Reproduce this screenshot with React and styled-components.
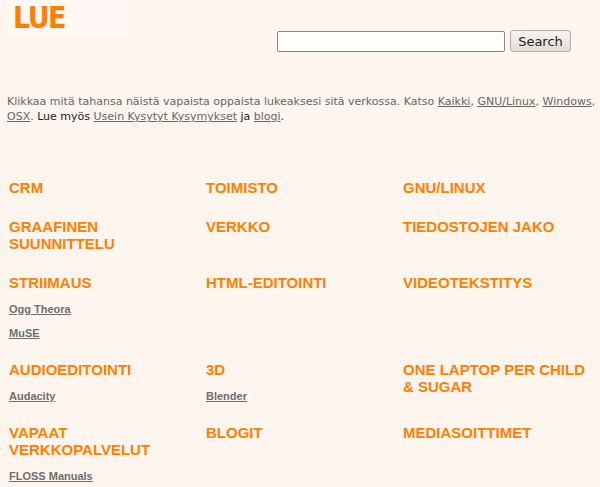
import React from "react";
import styled, { createGlobalStyle } from "styled-components";

const GlobalStyle = createGlobalStyle`
  html, body {
    margin: 0;
    padding: 0;
    background-color: #fef5ef;
  }
  body {
    font-family: "DejaVu Sans", Verdana, sans-serif;
  }
`;

const Page = styled.div`
  width: 600px;
  min-height: 487px;
  background-color: #fef5ef;
`;

const Header = styled.div`
  display: flex;
  justify-content: space-between;
  align-items: flex-start;
  padding: 0 29px 0 7px;
`;

const LogoBox = styled.div`
  width: 121px;
  height: 34px;
  background-color: #fff8f4;
  box-sizing: border-box;
  padding: 1px 0 0 6px;
`;

const Logo = styled.a`
  font-family: "DejaVu Sans Condensed", "DejaVu Sans", sans-serif;
  font-weight: bold;
  font-size: 30px;
  line-height: 34px;
  letter-spacing: -1.5px;
  color: #ff7f00;
  text-decoration: none;
`;

const SearchForm = styled.form`
  display: flex;
  align-items: center;
  gap: 5px;
  margin-top: 30px;
`;

const SearchInput = styled.input`
  width: 228px;
  height: 21px;
  box-sizing: border-box;
  border: 1px solid #8a8580;
  border-radius: 2px;
  background: #fffffc;
  padding: 0 4px;
  outline: none;
`;

const SearchButton = styled.button`
  width: 61px;
  height: 22px;
  box-sizing: border-box;
  border: 1px solid #b3ada6;
  border-radius: 3px;
  background: linear-gradient(#f7f4f0, #e2ddd7);
  font-family: "DejaVu Sans", sans-serif;
  font-size: 13px;
  color: #222;
  padding: 0;
`;

const Intro = styled.p`
  margin: 42px 2px 0 7px;
  font-size: 11px;
  line-height: 15px;
  color: #666;
`;

const Dark = styled.span`
  color: #222;
`;

const IntroLink = styled.a`
  color: #666;
  text-decoration: underline;
`;

const Grid = styled.div`
  display: grid;
  grid-template-columns: repeat(3, 197px);
  row-gap: 22px;
  margin-top: 55px;
  padding-left: 9px;
`;

const Cell = styled.div`
  padding-right: 8px;
`;

const Heading = styled.h2`
  margin: 0;
  font-family: "Liberation Sans", Arial, sans-serif;
  font-weight: bold;
  font-size: 15px;
  line-height: 17px;
  color: #ff8000;
`;

const SubList = styled.ul`
  list-style: none;
  margin: 0;
  padding: 0;
`;

const SubItem = styled.li`
  margin-top: 12px;
  font-family: "Liberation Sans", Arial, sans-serif;
  font-size: 11px;
  line-height: 12px;
`;

const SubLink = styled.a`
  font-weight: bold;
  color: #6e6e6e;
  text-decoration: underline;
`;

const categories = [
  { title: "CRM" },
  { title: "TOIMISTO" },
  { title: "GNU/LINUX" },
  { title: "GRAAFINEN SUUNNITTELU" },
  { title: "VERKKO" },
  { title: "TIEDOSTOJEN JAKO" },
  { title: "STRIIMAUS", books: ["Ogg Theora", "MuSE"] },
  { title: "HTML-EDITOINTI" },
  { title: "VIDEOTEKSTITYS" },
  { title: "AUDIOEDITOINTI", books: ["Audacity"] },
  { title: "3D", books: ["Blender"] },
  { title: "ONE LAPTOP PER CHILD & SUGAR" },
  { title: "VAPAAT VERKKOPALVELUT", books: ["FLOSS Manuals"] },
  { title: "BLOGIT" },
  { title: "MEDIASOITTIMET" },
];

export default function App() {
  return (
    <Page>
      <GlobalStyle />
      <Header>
        <LogoBox>
          <Logo href="#">LUE</Logo>
        </LogoBox>
        <SearchForm onSubmit={(e) => e.preventDefault()}>
          <SearchInput type="text" />
          <SearchButton type="submit">Search</SearchButton>
        </SearchForm>
      </Header>
      <Intro>
        Klikkaa mitä tahansa näistä vapaista oppaista lukeaksesi sitä verkossa. Katso{" "}
        <IntroLink href="#">Kaikki</IntroLink>, <IntroLink href="#">GNU/Linux</IntroLink>,{" "}
        <IntroLink href="#">Windows</IntroLink>, <IntroLink href="#">OSX</IntroLink>.{" "}
        <Dark>Lue myös</Dark> <IntroLink href="#">Usein Kysytyt Kysymykset</IntroLink>{" "}
        <Dark>ja</Dark> <IntroLink href="#">blogi</IntroLink>
        <Dark>.</Dark>
      </Intro>
      <Grid>
        {categories.map((cat) => (
          <Cell key={cat.title}>
            <Heading>{cat.title}</Heading>
            {cat.books && (
              <SubList>
                {cat.books.map((b) => (
                  <SubItem key={b}>
                    <SubLink href="#">{b}</SubLink>
                  </SubItem>
                ))}
              </SubList>
            )}
          </Cell>
        ))}
      </Grid>
    </Page>
  );
}
